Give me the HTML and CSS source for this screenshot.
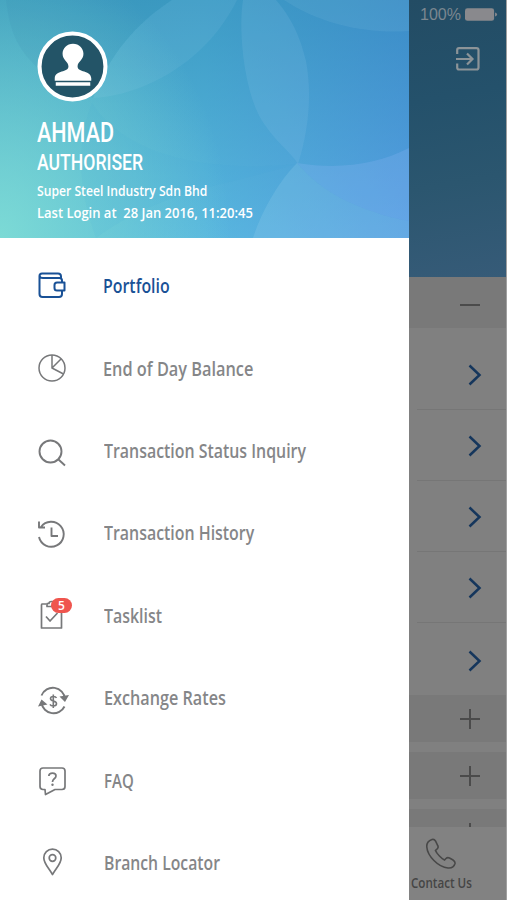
FILE: index.html
```html
<!DOCTYPE html>
<html lang="en">
<head>
<meta charset="utf-8">
<title>Portfolio</title>
<link rel="stylesheet" href="styles.css">
</head>
<body>
<div class="screen">
  <aside class="drawer">
    <header class="profile">
      <svg class="petals" viewBox="0 0 409 238" aria-hidden="true">
        <path d="M6 0C10 35 20 52 40 70L93 98C110 53 138 22 172 0Z" fill="#2d7fa8" opacity=".1"/>
        <path d="M172 0C138 22 110 53 93 98C137 96 204 67 237 0Z" fill="#b4dcf2" opacity=".09"/>
        <path d="M92 103C125 155 205 173 296 164C230 185 160 190 96 238C78 190 76 142 92 103Z" fill="#42a9dd" opacity=".08"/>
        <path d="M243 0C238 30 244 90 261 119C275 142 292 153 298 164C309 130 312 93 306 61C300 36 291 17 276 0Z" fill="#a4d4f0" opacity=".13"/>
        <path d="M284 0C320 24 366 34 409 31V0Z" fill="#a4d4f0" opacity=".1"/>
        <path d="M297 163C280 180 262 210 253 238H409V221C361 212 322 193 297 163Z" fill="#b4e0f4" opacity=".16"/>
        <path d="M297 163C340 170 378 164 409 148V221C361 212 322 193 297 163Z" fill="#a0c0ff" opacity=".2"/>
      </svg>
      <div class="avatar">
        <svg viewBox="0 0 70 70" aria-hidden="true">
          <circle cx="35" cy="35" r="32.500" fill="#235467" stroke="#fff" stroke-width="4"/>
          <path d="M35.500 12.500C29.500 12.500 25.200 17 25.200 22.500C25.200 29 31 30 31 35C31 41 18 38.500 17.500 46.500V49H53.500V46.500C53 38.500 40 41 40 35C40 30 45.800 29 45.800 22.500C45.800 17 41.500 12.500 35.500 12.500Z" fill="#fff"/>
          <path d="M18.500 50.500H52.500V54H18.500Z" fill="#fff"/>
        </svg>
      </div>
      <div class="who">
        <div class="name"><span>AHMAD</span></div>
        <div class="role"><span>AUTHORISER</span></div>
        <div class="meta company"><span>Super Steel Industry Sdn Bhd</span></div>
        <div class="meta login"><span>Last Login at&nbsp; 28 Jan 2016, 11:20:45</span></div>
      </div>
    </header>
    <nav class="menu">
      <a class="item active">
        <svg class="icon" viewBox="0 0 36 36"><g stroke-width="2"><path d="M27 10V8.500Q27 5.500 24 5.500H8Q5.500 5.500 5.500 8V26Q5.500 29 8.500 29H25Q28 29 28 26V23M28 15V12.500Q28 10 25.500 10H9Q5.500 10 5.500 7.500"/><path d="M30.500 14.500H23Q20.500 14.500 20.500 17V20Q20.500 22.500 23 22.500H30.500Z"/></g></svg>
        <span class="label">Portfolio</span>
      </a>
      <a class="item">
        <svg class="icon" viewBox="0 0 36 36"><g stroke-width="1.500"><circle cx="18" cy="17" r="13"/><path d="M18 4V17L29.500 23M18 17L27 8"/></g></svg>
        <span class="label l-balance">End of Day Balance</span>
      </a>
      <a class="item">
        <svg class="icon" viewBox="0 0 36 36"><g stroke-width="1.900"><circle cx="16.500" cy="18.500" r="11"/><path d="M24.500 26.500L31 32.500"/></g></svg>
        <span class="label l-status">Transaction Status Inquiry</span>
      </a>
      <a class="item">
        <svg class="icon" viewBox="0 0 36 36"><g stroke-width="1.900"><path d="M5 22A12.500 12.500 0 1 0 7 12M5 6.500V12.500H11M17.500 12.500V21H24"/></g></svg>
        <span class="label l-history">Transaction History</span>
      </a>
      <a class="item">
        <span class="icon-wrap">
          <svg class="icon" viewBox="0 0 36 36"><g stroke-width="1.700"><path d="M12 6H8Q7.500 6 7.500 7V30H27.500V7Q27.500 6 26.500 6H23M13 8.500V5.500H15Q15 3.500 17.500 3.500Q20 3.500 20 5.500H22V8.500ZM12 18.500L16 23L23.500 15"/></g></svg>
          <span class="badge">5</span>
        </span>
        <span class="label l-task">Tasklist</span>
      </a>
      <a class="item">
        <svg class="icon" viewBox="0 0 36 36"><g stroke-width="1.900"><path d="M7.500 15.500A12.200 12.200 0 0 1 31 19M30.500 26.500A12.200 12.200 0 0 1 7.500 23"/></g><path d="M25.500 16.500L35 15L31 22ZM4 26.500L7.500 19.500L13.500 24.500Z" fill="currentColor" stroke="none"/><g stroke-width="1.600"><path d="M22.500 18Q21.800 16.500 19.300 16.500Q16.500 16.500 16.500 18.600Q16.500 20.400 19.300 21Q22.500 21.700 22.500 23.800Q22.500 26 19.300 26Q16.800 26 16 24.300M19.300 14.500V28"/></g></svg>
        <span class="label l-rates">Exchange Rates</span>
      </a>
      <a class="item">
        <svg class="icon" viewBox="0 0 36 36"><g stroke-width="1.700"><path d="M9 5H28Q31 5 31 8V23.500Q31 26.500 28 26.500H21L11.500 31.500L11 26.500H9Q6 26.500 6 23.500V8Q6 5 9 5Z"/><path d="M14.800 13Q15 10.200 18.500 10.200Q22 10.200 22 13Q22 14.500 20 16Q18.500 17.200 18.500 19"/></g><circle cx="18.500" cy="21.800" r="1.200" fill="currentColor" stroke="none"/></svg>
        <span class="label l-faq">FAQ</span>
      </a>
      <a class="item">
        <svg class="icon" viewBox="0 0 36 36"><g stroke-width="1.700"><path d="M18.500 29.500C14 22 9.800 18.500 9.800 12.800A8.700 8.700 0 0 1 27.200 12.800C27.200 18.500 23 22 18.500 29.500Z"/><circle cx="18.500" cy="13" r="3.300"/></g></svg>
        <span class="label l-branch">Branch Locator</span>
      </a>
    </nav>
  </aside>
  <main class="page">
    <header class="topbar">
      <div class="status"><span class="pct">100%</span><svg class="battery" viewBox="0 0 34 14"><rect x="0" y="0" width="30" height="13" rx="2.500" fill="#89898d"/><path d="M31 4.500Q33 5 33 6.500T31 8.500Z" fill="#89898d"/></svg></div>
      <svg class="logout" viewBox="0 0 24 24"><path d="M1.200 7V3Q1.200 1.200 3 1.200H20.500Q22.500 1.200 22.500 3V20.500Q22.500 22.500 20.500 22.500H3Q1.200 22.500 1.200 20.500V16.500M0 12H16M11 6.500L16.500 12L11 17.500"/></svg>
    </header>
    <div class="bar open"><svg class="sign" viewBox="0 0 20 20"><path d="M0 10H20"/></svg></div>
    <div class="row first"><svg class="chev" viewBox="0 0 14 22"><path d="M1.500 1.500L11.500 11L1.500 20.500"/></svg></div>
    <div class="row"><svg class="chev" viewBox="0 0 14 22"><path d="M1.500 1.500L11.500 11L1.500 20.500"/></svg></div>
    <div class="row"><svg class="chev" viewBox="0 0 14 22"><path d="M1.500 1.500L11.500 11L1.500 20.500"/></svg></div>
    <div class="row"><svg class="chev" viewBox="0 0 14 22"><path d="M1.500 1.500L11.500 11L1.500 20.500"/></svg></div>
    <div class="row last"><svg class="chev" viewBox="0 0 14 22"><path d="M1.500 1.500L11.500 11L1.500 20.500"/></svg></div>
    <div class="bar"><svg class="sign" viewBox="0 0 20 20"><path d="M0 10H20M10 0V20"/></svg></div>
    <div class="bar"><svg class="sign" viewBox="0 0 20 20"><path d="M0 10H20M10 0V20"/></svg></div>
    <div class="bar cut"><svg class="sign" viewBox="0 0 20 20"><path d="M0 10H20M10 0V20"/></svg></div>
    <footer class="contact">
      <svg class="phone" viewBox="0 0 32 32"><path d="M7 1.500C4 2.500 1.500 5 1.800 9C2.500 18 13 29 23 30C26 30.300 29 29 30 25.500C30.300 24 29.500 23 28 22L24.500 20C23 19.300 22 19.500 21 20.500L19.500 22C17 21 11.500 15.500 10.500 12.500L12.500 10.500C13.300 9.500 13.300 8.500 12.700 7.500L10.500 3C9.700 1.700 8.500 1 7 1.500Z"/></svg>
      <div class="contact-label"><span>Contact Us</span></div>
    </footer>
  </main>
</div>
</body>
</html>
```

FILE: styles.css
```css
* { box-sizing: border-box; }
body {
  margin: 0;
  background: #fff;
  font-family: "Open Sans", "Noto Sans", sans-serif;
}
svg { display: block; fill: none; flex: none; }
.screen {
  display: grid;
  grid-template-columns: 409px 98px;
  width: 507px;
  height: 900px;
  overflow: hidden;
}
.drawer { background: #fff; overflow: hidden; height: 900px; }
.profile {
  position: relative;
  height: 238px;
  padding: 31px 0 0 37px;
  color: #fff;
  background:
    radial-gradient(ellipse 230px 290px at 0 100%, rgba(128, 222, 214, .9), rgba(128, 222, 214, 0)),
    linear-gradient(180deg, rgba(48, 140, 184, .6), rgba(105, 190, 235, .35)),
    linear-gradient(90deg, #4db2c4 0%, #50b3d8 50%, #4b8fdd 100%);
}
.petals { position: absolute; left: 0; top: 0; width: 409px; height: 238px; }
.avatar { position: relative; width: 71px; height: 71px; }
.who { position: relative; }
.who span, .label, .contact-label span {
  display: inline-block;
  transform-origin: 0 50%;
  white-space: nowrap;
}
.name, .role { font-family: Roboto, sans-serif; font-weight: 500; }
.name { margin-top: 14px; height: 33px; line-height: 33px; font-size: 28px; }
.name span { transform: scaleX(.77); }
.role { height: 27px; line-height: 27px; font-size: 22px; }
.role span { transform: scaleX(.8); }
.meta { height: 22px; line-height: 22px; font-size: 15px; font-weight: 600; }
.company { margin-top: 3px; }
.company span { transform: scaleX(.811); }
.login span { transform: scaleX(.866); }
.menu { padding-top: 7px; }
.item {
  display: flex;
  align-items: center;
  height: 82.4px;
  padding-left: 34px;
  color: #77787a;
}
.icon { width: 36px; height: 36px; stroke: currentColor; stroke-linejoin: round; }
.icon-wrap { position: relative; width: 36px; height: 36px; flex: none; }
.badge {
  position: absolute;
  left: 17px;
  top: 0;
  width: 21px;
  height: 15px;
  border-radius: 8px;
  background: #ef554e;
  color: #fff;
  font-size: 12px;
  font-weight: 600;
  line-height: 15px;
  text-align: center;
}
.label {
  margin-left: 33px;
  font-size: 20px;
  font-weight: 600;
  line-height: 28px;
  color: #858688;
  transform: scaleX(.795);
}
.l-balance { transform: scaleX(.815); }
.l-status, .l-history, .l-task, .l-rates, .l-faq, .l-branch { margin-left: 34px; }
.l-rates { transform: scaleX(.81); }
.l-faq { transform: scaleX(.75); }
.l-branch { transform: scaleX(.787); }
.active, .active .label { color: #195196; }
.page {
  background: #808080;
  border-right: 1px solid #a0a0a0;
  height: 900px;
  overflow: hidden;
  display: flex;
  flex-direction: column;
}
.topbar {
  height: 277px;
  flex: none;
  padding: 5px 8px 0 11px;
  background: linear-gradient(170deg, #234c64 0%, #24516b 35%, #2b566f 65%, #365b78 100%);
}
.status { display: flex; align-items: center; justify-content: space-between; height: 19px; }
.pct { font-family: "Liberation Sans", sans-serif; font-size: 16px; color: #7b8790; }
.battery { width: 33px; height: 14px; }
.logout {
  width: 24px;
  height: 24px;
  margin: 23px 0 0 36px;
  stroke: #8c9498;
  stroke-width: 2.2;
}
.bar {
  flex: none;
  height: 47px;
  margin-bottom: 10px;
  padding-left: 51px;
  display: flex;
  align-items: center;
  background: #797979;
}
.open { height: 51px; margin: 0; padding-top: 5px; }
.cut { height: 18px; margin: 0; overflow: hidden; align-items: flex-start; padding-top: 14px; }
.sign { width: 20px; height: 20px; stroke: #4b4b4b; stroke-width: 2; }
.row {
  flex: none;
  height: 71px;
  margin-left: 8px;
  padding: 2px 0 0 51px;
  display: flex;
  align-items: center;
  border-bottom: 1px solid #767676;
}
.first { height: 82px; padding-top: 12px; }
.last { height: 72px; padding-top: 4px; border: 0; }
.chev { width: 14px; height: 22px; stroke: #15365c; stroke-width: 2.5; }
.contact { flex: 1; padding-top: 11px; background: #828282; }
.phone { width: 32px; height: 32px; margin-left: 16px; stroke: #484848; stroke-width: 1.6; }
.contact-label { height: 20px; margin: 2px 0 0 2px; line-height: 20px; font-size: 15px; font-weight: 600; color: #454545; }
.contact-label span { transform: scaleX(.775); }
```
